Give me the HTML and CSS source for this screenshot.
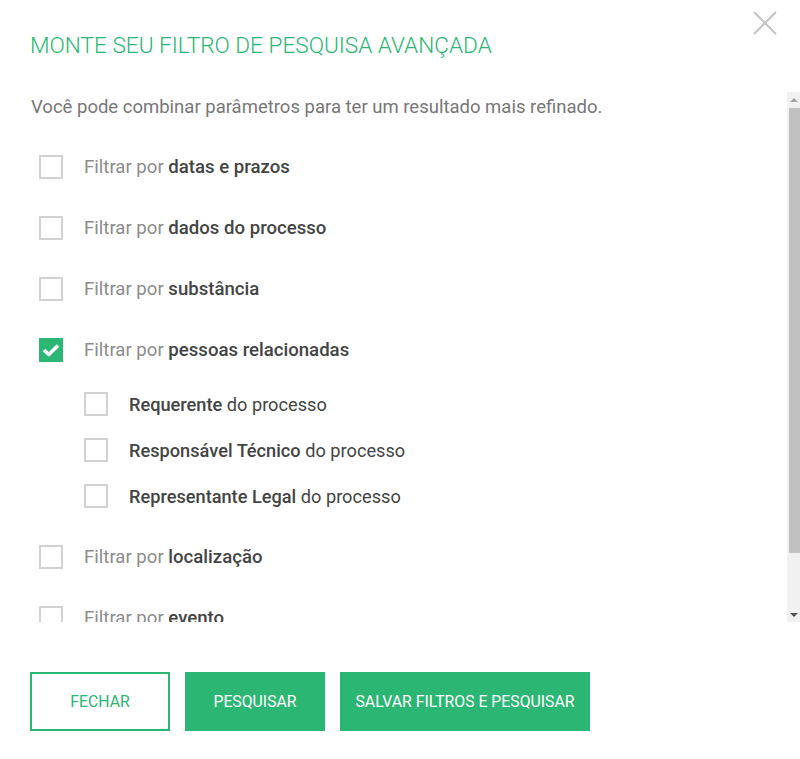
FILE: index.html
```html
<!DOCTYPE html>
<html lang="pt-BR">
<head>
    <meta charset="UTF-8">
    <meta name="viewport" content="width=device-width, initial-scale=1.0">
    <title>Filtro de pesquisa avançada</title>
    <link rel="stylesheet" href="styles.css">
</head>
<body>
    <div class="modal">
        <button class="modal-close" type="button" aria-label="Fechar">
            <svg width="24" height="24" viewBox="0 0 24 24">
                <path d="M1 1 L23 23 M23 1 L1 23" stroke="#c4c4c4" stroke-width="2" fill="none"/>
            </svg>
        </button>

        <h1 class="modal-title">MONTE SEU FILTRO DE PESQUISA AVANÇADA</h1>

        <div class="modal-body">
            <div class="scroll-content">
                <p class="intro">Você pode combinar parâmetros para ter um resultado mais refinado.</p>

                <ul class="filters">
                    <li class="filter">
                        <label class="check-row">
                            <span class="check"></span>
                            <span class="check-label">Filtrar por <b>datas e prazos</b></span>
                        </label>
                    </li>
                    <li class="filter">
                        <label class="check-row">
                            <span class="check"></span>
                            <span class="check-label">Filtrar por <b>dados do processo</b></span>
                        </label>
                    </li>
                    <li class="filter">
                        <label class="check-row">
                            <span class="check"></span>
                            <span class="check-label">Filtrar por <b>substância</b></span>
                        </label>
                    </li>
                    <li class="filter">
                        <label class="check-row">
                            <span class="check checked">
                                <svg width="18" height="14" viewBox="0 0 18 14">
                                    <path d="M2 7 L6.8 11.5 L16 2.5" stroke="#fff" stroke-width="3.6" stroke-linejoin="round" fill="none"/>
                                </svg>
                            </span>
                            <span class="check-label">Filtrar por <b>pessoas relacionadas</b></span>
                        </label>
                        <ul class="sub-filters">
                            <li class="check-row">
                                <span class="check"></span>
                                <span class="sub-label"><b>Requerente</b> do processo</span>
                            </li>
                            <li class="check-row">
                                <span class="check"></span>
                                <span class="sub-label"><b>Responsável Técnico</b> do processo</span>
                            </li>
                            <li class="check-row">
                                <span class="check"></span>
                                <span class="sub-label"><b>Representante Legal</b> do processo</span>
                            </li>
                        </ul>
                    </li>
                    <li class="filter">
                        <label class="check-row">
                            <span class="check"></span>
                            <span class="check-label">Filtrar por <b>localização</b></span>
                        </label>
                    </li>
                    <li class="filter">
                        <label class="check-row">
                            <span class="check"></span>
                            <span class="check-label">Filtrar por <b>evento</b></span>
                        </label>
                    </li>
                </ul>
            </div>

            <!-- barra de rolagem desenhada -->
            <div class="scrollbar">
                <span class="sb-btn sb-up"></span>
                <span class="sb-thumb"></span>
                <span class="sb-btn sb-down"></span>
            </div>
        </div>

        <div class="modal-actions">
            <button class="btn btn-outline" type="button">FECHAR</button>
            <button class="btn" type="button">PESQUISAR</button>
            <button class="btn btn-wide" type="button">SALVAR FILTROS E PESQUISAR</button>
        </div>
    </div>
</body>
</html>
```

FILE: styles.css
```css
body {
    font-family: Roboto, "Liberation Sans", sans-serif;
    margin: 0;
    padding: 0;
    background-color: #fff;
}
.modal {
    position: relative;
    padding: 28px 0 0 30px;
}
.modal-close {
    position: absolute;
    top: 11px;
    right: 23px;
    padding: 0;
    border: none;
    background: none;
    cursor: pointer;
}
.modal-title {
    margin: 0;
    font-size: 22.6px;
    font-weight: 300;
    color: #2bb673;
    line-height: 36px;
}
.modal-body {
    display: flex;
    margin-top: 28px;
    height: 530px;
}
.scroll-content {
    flex: 1;
    overflow: hidden;
    padding-left: 1px;
}
.scrollbar {
    width: 13px;
    background-color: #f1f1f1;
    display: flex;
    flex-direction: column;
    align-items: flex-end;
}
.sb-btn {
    width: 13px;
    height: 15px;
    display: flex;
    align-items: center;
    justify-content: center;
}
.sb-up {
    margin-bottom: 1px;
}
.sb-up::before {
    content: "";
    border-left: 4px solid transparent;
    border-right: 4px solid transparent;
    border-bottom: 4px solid #a3a3a3;
}
.sb-down {
    margin-top: auto;
}
.sb-down::before {
    content: "";
    border-left: 4px solid transparent;
    border-right: 4px solid transparent;
    border-top: 4px solid #505050;
}
.sb-thumb {
    width: 11px;
    height: 445px;
    background-color: #c1c1c1;
}
.intro {
    margin: 3px 0 0;
    font-size: 18.5px;
    line-height: 24px;
    color: #777;
}
.filters {
    list-style: none;
    margin: 36px 0 0;
    padding: 0 0 0 8px;
}
.filter {
    margin-bottom: 37px;
}
.check-row {
    display: flex;
    align-items: center;
    height: 24px;
    gap: 21px;
}
.check {
    box-sizing: border-box;
    width: 24px;
    height: 24px;
    border: 2px solid #d2d2d2;
    display: flex;
    align-items: center;
    justify-content: center;
    flex-shrink: 0;
}
.check.checked {
    background-color: #2bb673;
    border-color: #2bb673;
}
.check-label {
    font-size: 18.6px;
    color: #8c8c8c;
}
.check-label b,
.sub-label b {
    font-weight: 500;
    color: #444;
}
.sub-filters {
    list-style: none;
    margin: 30px 0 0;
    padding: 0 0 0 45px;
}
.sub-filters .check-row {
    margin-bottom: 22px;
}
.sub-filters .check-row:last-child {
    margin-bottom: 0;
}
.sub-label {
    font-size: 18.2px;
    color: #444;
}
.modal-actions {
    display: flex;
    gap: 15px;
    margin-top: 50px;
}
.btn {
    height: 59px;
    width: 140px;
    border: none;
    background-color: #2bb673;
    color: #fff;
    font-family: Roboto, "Liberation Sans", sans-serif;
    font-size: 15.8px;
    cursor: pointer;
}
.btn-outline {
    box-sizing: border-box;
    background-color: #fff;
    border: 2px solid #2bb673;
    color: #2bb673;
}
.btn-wide {
    width: 250px;
    padding: 0;
}
```
